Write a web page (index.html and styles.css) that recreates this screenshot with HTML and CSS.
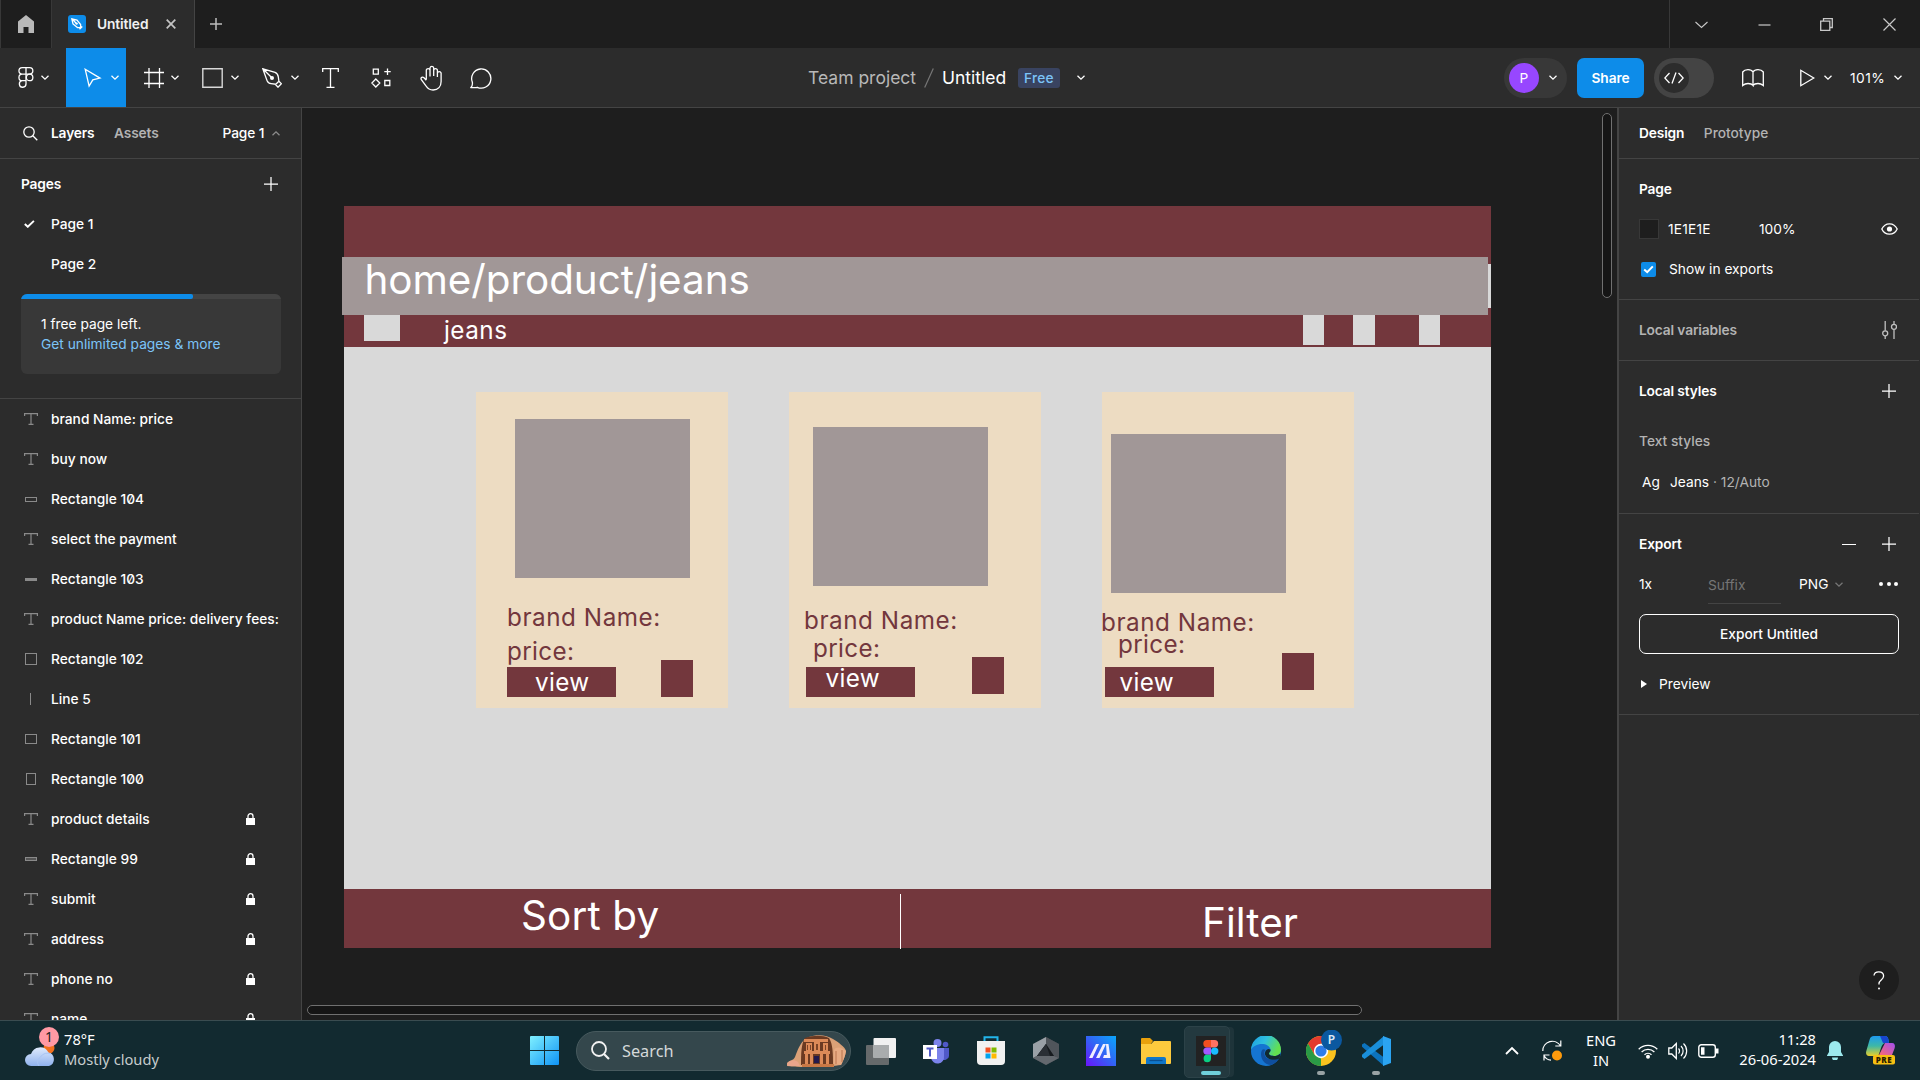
FILE: index.html
```html
<!DOCTYPE html>
<html lang="en">
<head>
<meta charset="utf-8">
<title>Untitled – Figma</title>
<link rel="stylesheet" href="styles.css">
</head>
<body>
<svg class="defs" width="0" height="0">
  <symbol id="chev" viewBox="0 0 8 5"><path d="M.5 .8 4 4.1 7.500 .8" fill="none" stroke="currentColor" stroke-width="1.300"/></symbol>
  <symbol id="plus" viewBox="0 0 14 14"><path d="M7 0v14M0 7h14" fill="none" stroke="currentColor" stroke-width="1.250"/></symbol>
  <symbol id="text" viewBox="0 0 14 12"><path d="M.6 3V.6h12.800V3M7 .6v10.800M4.500 11.400h5" fill="none" stroke="currentColor" stroke-width="1.200"/></symbol>
  <symbol id="lock" viewBox="0 0 9 12"><path d="M0 5h9v7H0z" fill="currentColor"/><path d="M2 5.500V3.200a2.500 2.500 0 0 1 5 0v2.300" fill="none" stroke="currentColor" stroke-width="1.300"/></symbol>
</svg>

<header class="titlebar">
  <div class="home"><svg width="16" height="18" viewBox="0 0 16 18"><path d="M8 0 0 6.500V18h5.500v-6h5v6H16V6.500z" fill="#b9b9b9"/></svg></div>
  <div class="tab">
    <svg width="18" height="18" viewBox="0 0 18 18"><rect width="18" height="18" rx="3" fill="#0d8ce9"/><path d="M3.800 3.800 9 5l3.600 4.500.1 2.200-1 1-2.200-.1L5 9z M3.800 3.800 8.200 8.200M11.500 14.300l2.800-2.800" fill="none" stroke="#fff" stroke-width="1.300"/><circle cx="8.600" cy="8.600" r="1.200" fill="#fff"/></svg>
    <span class="tab-name">Untitled</span>
    <svg class="tab-x" width="10" height="10" viewBox="0 0 10 10"><path d="M.7.7l8.600 8.600M9.300.7.7 9.300" stroke="#c4c4c4" stroke-width="1.700"/></svg>
  </div>
  <svg class="newtab" width="12" height="12" viewBox="0 0 12 12"><path d="M6 0v12M0 6h12" stroke="#bdbdbd" stroke-width="1.500"/></svg>
  <div class="winctl">
    <svg width="13" height="13" viewBox="0 0 13 13"><path d="m.5 4 6 5.500L12.500 4" fill="none" stroke="#c8c8c8" stroke-width="1.100"/></svg>
    <svg width="13" height="13" viewBox="0 0 13 13"><path d="M.5 7h12" stroke="#c8c8c8" stroke-width="1.200"/></svg>
    <svg width="13" height="13" viewBox="0 0 13 13"><path d="M.7 3.200h9.100v9.100H.7zM3.500 3V.7h8.800v8.800H10" fill="none" stroke="#c8c8c8" stroke-width="1.300"/></svg>
    <svg width="13" height="13" viewBox="0 0 13 13"><path d="m.5.5 12 12M12.500.5l-12 12" stroke="#c8c8c8" stroke-width="1.200"/></svg>
  </div>
</header>

<nav class="toolbar">
  <div class="tools">
    <div class="tool menu"><svg width="16" height="21" viewBox="0 0 16 21"><path d="M8 .7H4.200a3.200 3.200 0 0 0 0 6.500H8zM8 .7h3.600a3.200 3.200 0 0 1 0 6.500H8zM8 7.200H4.200a3.200 3.200 0 0 0 0 6.500H8zM8 13.700H4.200a3.300 3.300 0 1 0 3.800 3.200z" fill="none" stroke="#fff" stroke-width="1.300"/><circle cx="11.600" cy="10.450" r="3.250" fill="none" stroke="#fff" stroke-width="1.300"/></svg><svg class="chev"><use href="#chev"/></svg></div>
    <div class="tool active"><svg width="18" height="20" viewBox="0 0 18 20"><path d="M1.200 1.200 16 10.100l-7.200 1.700-3.700 6.300z" fill="none" stroke="#fff" stroke-width="1.300"/></svg><svg class="chev"><use href="#chev"/></svg></div>
    <div class="tool"><svg width="20" height="20" viewBox="0 0 20 20"><path d="M5 0v20M15.500 0v20M0 4.500h20M0 15.500h20" stroke="#fff" stroke-width="1.300"/></svg><svg class="chev"><use href="#chev"/></svg></div>
    <div class="tool rect"><svg width="21" height="20" viewBox="0 0 21 20"><path d="M.8.8h19.400v18.400H.8z" fill="none" stroke="#d8d8d8" stroke-width="1.400"/></svg><svg class="chev"><use href="#chev"/></svg></div>
    <div class="tool pen"><svg width="20" height="20" viewBox="0 0 20 20"><path d="M.8.8 5 12.500c.8 2 2 2.900 4 3.100l4.800.6 3.100-2.900-.6-4.400c-.3-2.300-1.200-3.700-3.200-4.500zM.8.8l9 9M13.500 16.500l2.500 2.700 3.400-3.400-2.500-2.500" fill="none" stroke="#fff" stroke-width="1.300"/><circle cx="10" cy="10" r="2" fill="#fff"/></svg><svg class="chev"><use href="#chev"/></svg></div>
    <div class="tool single type"><svg width="17" height="20" viewBox="0 0 17 20"><path d="M.7 4V.7h15.600V4M8.500.7v18.600M4.500 19.300h8" fill="none" stroke="#fff" stroke-width="1.300"/></svg></div>
    <div class="tool single"><svg width="20" height="20" viewBox="0 0 20 20"><path d="M1.500 1.200h5v5h-5zM13 12.500h5v5h-5zM15.700.5v6.400M12.500 3.700h6.400M4 11l4 4-4 4-4-4z" fill="none" stroke="#fff" stroke-width="1.300" transform="translate(.8 0)"/></svg></div>
    <div class="tool single"><svg width="23" height="26" viewBox="0 0 23 26"><path d="M6.300 14.500V5a1.900 1.900 0 0 1 3.700 0v6.500M10 11V2.800a1.900 1.900 0 0 1 3.700 0V11M13.700 5a1.900 1.900 0 0 1 3.700 0v7M17.400 8a1.900 1.900 0 0 1 3.700 0v8.500c0 5-3 8.500-8 8.500-3.500 0-5.500-1.500-7-4L1.200 14.500c-.8-2 1.300-3.200 2.800-1.800l2.300 2.600" fill="none" stroke="#fff" stroke-width="1.300"/></svg></div>
    <div class="tool single"><svg width="22" height="22" viewBox="0 0 22 22"><path d="M1 20.500c1.600-2 1.700-3.500 1.300-5.500a9.600 9.600 0 1 1 5 5.300c-1.500.5-4 .4-6.300.2z" fill="none" stroke="#fff" stroke-width="1.300"/></svg></div>
  </div>
  <div class="doc">
    <span class="team">Team project</span>
    <svg width="10" height="20" viewBox="0 0 10 20"><path d="M.7 19.500 9.300.5" stroke="#777" stroke-width="1.200"/></svg>
    <span class="docname">Untitled</span>
    <span class="free">Free</span>
    <svg class="chev"><use href="#chev"/></svg>
  </div>
  <div class="actions">
    <div class="avatar"><span>P</span><svg class="chev"><use href="#chev"/></svg></div>
    <div class="share">Share</div>
    <div class="devmode"><span><svg width="20" height="12" viewBox="0 0 20 12"><path d="M5.500 1 .8 6l4.700 5M14.500 1l4.700 5-4.700 5M12 .5 8 11.500" fill="none" stroke="#fff" stroke-width="1.300"/></svg></span></div>
    <svg class="book" width="22" height="18" viewBox="0 0 22 18"><path d="M11 3v13.500C10 15 8 14.500 6 14.500s-3.500.5-5.300 2V3C2 1.200 4 .7 6 .7s4 .6 5 2.300c1-1.700 3-2.300 5-2.300s4 .5 5.300 2.300v13.500c-1.800-1.500-3.300-2-5.300-2s-4 .5-5 2" fill="none" stroke="#fff" stroke-width="1.300"/></svg>
    <svg class="play" width="15" height="18" viewBox="0 0 15 18"><path d="M.8 1.300v15.400L13.800 9z" fill="none" stroke="#fff" stroke-width="1.300"/></svg>
    <svg class="chev"><use href="#chev"/></svg>
    <span class="zoom">101%</span>
    <svg class="chev"><use href="#chev"/></svg>
  </div>
</nav>

<main class="workspace">
  <aside class="left">
    <div class="ltabs">
      <svg width="15" height="15" viewBox="0 0 15 15"><circle cx="6" cy="6" r="5.200" fill="none" stroke="#fff" stroke-width="1.300"/><path d="m9.800 9.800 4.500 4.500" stroke="#fff" stroke-width="1.300"/></svg>
      <b class="t-layers">Layers</b><b class="t-assets">Assets</b>
      <span class="pagepick">Page 1</span><svg class="chev up"><use href="#chev"/></svg>
    </div>
    <section class="pages">
      <div class="pages-head"><b>Pages</b><svg class="plus"><use href="#plus"/></svg></div>
      <div class="page"><svg width="11" height="8" viewBox="0 0 11 8"><path d="m.8 4 3 2.800L9.900.9" fill="none" stroke="#fff" stroke-width="1.900"/></svg><span>Page 1</span></div>
      <div class="page"><i></i><span>Page 2</span></div>
      <div class="upsell"><div class="meter"><i></i></div><p>1 free page left.</p><p class="link">Get unlimited pages &amp; more</p></div>
    </section>
    <ul class="layers">
      <li><svg class="ti"><use href="#text"/></svg><span>brand Name: price</span></li>
      <li><svg class="ti"><use href="#text"/></svg><span>buy now</span></li>
      <li><i class="r wide"></i><span>Rectangle 104</span></li>
      <li><svg class="ti"><use href="#text"/></svg><span>select the payment</span></li>
      <li><i class="r flat"></i><span>Rectangle 103</span></li>
      <li><svg class="ti"><use href="#text"/></svg><span>product Name price: delivery fees:</span></li>
      <li><i class="r sq"></i><span>Rectangle 102</span></li>
      <li><i class="r line"></i><span>Line 5</span></li>
      <li><i class="r mid"></i><span>Rectangle 101</span></li>
      <li><i class="r tall"></i><span>Rectangle 100</span></li>
      <li><svg class="ti"><use href="#text"/></svg><span>product details</span><svg class="lock"><use href="#lock"/></svg></li>
      <li><i class="r thin"></i><span>Rectangle 99</span><svg class="lock"><use href="#lock"/></svg></li>
      <li><svg class="ti"><use href="#text"/></svg><span>submit</span><svg class="lock"><use href="#lock"/></svg></li>
      <li><svg class="ti"><use href="#text"/></svg><span>address</span><svg class="lock"><use href="#lock"/></svg></li>
      <li><svg class="ti"><use href="#text"/></svg><span>phone no</span><svg class="lock"><use href="#lock"/></svg></li>
      <li><svg class="ti"><use href="#text"/></svg><span>name</span><svg class="lock"><use href="#lock"/></svg></li>
    </ul>
  </aside>

  <section class="canvas">
    <div class="frame">
      <div class="shape topbar"></div>
      <div class="shape bottombar"></div>
      <div class="shape strip"></div>
      <div class="shape crumbs"></div>
      <div class="shape logo"></div>
      <div class="shape nav1"></div><div class="shape nav2"></div><div class="shape nav3"></div>
      <div class="label xl crumb-text">home/product/jeans</div>
      <div class="label md jeans-text">jeans</div>

      <div class="shape card c1"></div><div class="shape photo p1"></div>
      <div class="label md dark b1">brand Name:</div><div class="label md dark r1">price:</div>
      <div class="shape btn v1"></div><div class="shape fav f1"></div><div class="label md w1">view</div>

      <div class="shape card c2"></div><div class="shape photo p2"></div>
      <div class="label md dark b2">brand Name:</div><div class="label md dark r2">price:</div>
      <div class="shape btn v2"></div><div class="shape fav f2"></div><div class="label md w2">view</div>

      <div class="shape card c3"></div><div class="shape photo p3"></div>
      <div class="label md dark b3">brand Name:</div><div class="label md dark r3">price:</div>
      <div class="shape btn v3"></div><div class="shape fav f3"></div><div class="label md w3">view</div>

      <div class="shape divider"></div>
      <div class="label xl sort">Sort by</div>
      <div class="label xl filter">Filter</div>
    </div>
    <div class="vscroll"></div>
    <div class="hscroll"></div>
  </section>

  <aside class="right">
    <div class="rtabs"><b>Design</b><span>Prototype</span></div>
    <section class="sec-page">
      <div class="row h40"><b>Page</b></div>
      <div class="row h40"><i class="swatch"></i><span class="hex">1E1E1E</span><span>100%</span>
        <svg class="end eye" width="17" height="12" viewBox="0 0 17 12"><path d="M.8 6C2.300 2.800 5 .8 8.500.8s6.200 2 7.700 5.200c-1.500 3.200-4.200 5.200-7.700 5.200S2.300 9.200.8 6z" fill="none" stroke="#fff" stroke-width="1.300"/><circle cx="8.500" cy="6" r="2.600" fill="#fff"/></svg></div>
      <div class="row h40"><i class="check"><svg width="11" height="9" viewBox="0 0 11 9"><path d="m1.200 4.500 3 2.700L9.800 1.400" fill="none" stroke="#fff" stroke-width="2"/></svg></i><span>Show in exports</span></div>
    </section>
    <section class="sec-vars"><div class="row h60"><b class="muted">Local variables</b>
      <svg class="end vars" width="15" height="18" viewBox="0 0 15 18"><path d="M3.200 0v9.800M3.200 15v3M12 0v3M12 8.500V18" stroke="#c0c0c0" stroke-width="1.300"/><circle cx="3.200" cy="12.300" r="2.500" fill="none" stroke="#c0c0c0" stroke-width="1.300"/><circle cx="12" cy="5.800" r="2.500" fill="none" stroke="#c0c0c0" stroke-width="1.300"/></svg></div></section>
    <section class="sec-styles">
      <div class="row h60"><b>Local styles</b><svg class="plus end"><use href="#plus"/></svg></div>
      <div class="row h40"><span class="muted med">Text styles</span></div>
      <div class="row h42"><span class="ag">Ag</span><span>Jeans <em>· 12/Auto</em></span></div>
    </section>
    <section class="sec-export">
      <div class="row h60"><b>Export</b><i class="minus"></i><svg class="plus"><use href="#plus"/></svg></div>
      <div class="row exp"><span class="scale">1x</span><span class="suffix">Suffix</span><span>PNG</span><svg class="chev dim"><use href="#chev"/></svg><span class="dots"><i></i><i></i><i></i></span></div>
      <div class="exportbtn">Export Untitled</div>
      <div class="row h60"><svg class="tri" width="6" height="8" viewBox="0 0 6 8"><path d="M0 0v8l6-4z" fill="#fff"/></svg><span>Preview</span></div>
    </section>
    <div class="help"><svg width="12" height="19" viewBox="0 0 12 19"><path d="M1 4.500C1.200 2 3 .8 5.800.8S10.600 2.500 10.600 5c0 3.800-4.600 4-4.600 7.500v1" fill="none" stroke="#fff" stroke-width="1.300"/><circle cx="6" cy="17.500" r="1" fill="#fff"/></svg></div>
  </aside>
</main>

<footer class="taskbar">
  <div class="weather">
    <svg width="36" height="40" viewBox="0 0 36 40">
      <defs><linearGradient id="cl" x1="0" y1="0" x2="0" y2="1"><stop offset="0" stop-color="#dfeafc"/><stop offset="1" stop-color="#8fb2ee"/></linearGradient></defs>
      <circle cx="24" cy="17" r="5.500" fill="#f2701d"/>
      <path d="M6 35a6 6 0 0 1 0-12 9.500 9.500 0 0 1 17.500-1.500A7 7 0 0 1 24 35z" fill="url(#cl)"/>
      <path d="M14 35a6 6 0 0 1 1.500-9 8 8 0 0 1 10.500-3" fill="none" stroke="#a9c5f3" stroke-width="1"/>
    </svg>
    <span class="badge">1</span>
    <div class="forecast"><p>78°F</p><p class="cloudy">Mostly cloudy</p></div>
  </div>
  <svg class="win" width="29" height="29" viewBox="0 0 29 29"><defs><linearGradient id="wg" x1="0" y1="0" x2="1" y2="1"><stop offset="0" stop-color="#7ff0ff"/><stop offset="1" stop-color="#0f93f5"/></linearGradient></defs><path d="M0 1a1 1 0 0 1 1-1h13v14H0zM15 0h13a1 1 0 0 1 1 1v13H15zM0 15h14v14H1a1 1 0 0 1-1-1zM15 15h14v13a1 1 0 0 1-1 1H15z" fill="url(#wg)"/></svg>
  <div class="search">
    <svg width="19" height="19" viewBox="0 0 19 19"><circle cx="8" cy="8" r="7" fill="none" stroke="#f2f2f2" stroke-width="1.800"/><path d="m13 13 5 5" stroke="#f2f2f2" stroke-width="2.200"/></svg>
    <span>Search</span>
    <svg class="petra" width="60" height="32" viewBox="0 0 60 32">
      <path d="M0 28c3-3 6-2 8-6 3-8 6-17 14-20C30-1 40 0 46 4c5 3 12 8 13 12-1 6-3 10-5 14-12 2-40 3-54 1z" fill="#dba177"/>
      <path d="M14 30c0-10 0-21 4-27 8-3 18-3 24 0 4 6 4 17 4 27z" fill="#6b3a22"/>
      <path d="M17 4h24v3H17zM19 8h6v8h-6zM27 6h6v10h-6zM36 8h5v8h-5zM17 16h26v3H17zM18 19h3v11h-3zM23 19h3v11h-3zM33 19h3v11h-3zM39 19h3v11h-3z" fill="#dc8a58"/>
      <path d="M20 10h1v5h-1zM23 10h1v5h-1zM29 9h2v6h-2zM38 10h1v5h-1z" fill="#7d4426"/>
      <path d="M27 21h5v7h-5z" fill="#241a4d"/><path d="M15 29h32v3H15z" fill="#c97845"/>
      <path d="M47 15c2-4 8-3 12 1-1 6-3 10-5 14l-7-1z" fill="#e8ab83"/><path d="M49 16v13M55 15v12" stroke="#b9744e"/>
      <path d="M0 29c2-4 7-5 11-2l2 4H1z" fill="#e9a58b"/>
    </svg>
  </div>
  <div class="apps">
    <div class="app"><svg width="32" height="32" viewBox="0 0 32 32"><rect x="1" y="10" width="23" height="20" rx="1" fill="#666a6b"/><rect x="8.500" y="3" width="22.500" height="20" rx="1" fill="#f1f1f1"/><path d="M8.500 10H24v13H8.500z" fill="#a9acad"/></svg></div>
    <div class="app"><svg width="30" height="30" viewBox="0 0 30 30"><circle cx="16.500" cy="7" r="4" fill="#7b83eb"/><circle cx="24.500" cy="8.500" r="2.800" fill="#5059c9"/><path d="M20 12h8v8a5 5 0 0 1-8 3z" fill="#5059c9"/><path d="M10 12h13v8a6.500 6.500 0 0 1-13 2z" fill="#7b83eb"/><path d="M2 9h14v14H2z" fill="#fff"/><path d="M5.500 12.500h7M9 12.500v8" stroke="#5059c9" stroke-width="2"/></svg></div>
    <div class="app"><svg width="30" height="30" viewBox="0 0 30 30"><path d="M8.500 6V1.200h13V6" fill="none" stroke="#22b5ea" stroke-width="2"/><path d="M1 5h28v20a4 4 0 0 1-4 4H5a4 4 0 0 1-4-4z" fill="#f1f1f1"/><path d="M9.500 11.500h5v5h-5z" fill="#f25022"/><path d="M15.500 11.500h5v5h-5z" fill="#7fba00"/><path d="M9.500 17.500h5v5h-5z" fill="#00a4ef"/><path d="M15.500 17.500h5v5h-5z" fill="#ffb900"/></svg></div>
    <div class="app"><svg width="30" height="30" viewBox="0 0 30 30"><path d="m15 1 13 7v14l-13 7-13-7V8z" fill="#3b4046"/><path d="M15 1 2 8v14l4-2 9-12z" fill="#9aa0a6"/><path d="m15 1 13 7v14l-5-2-8-12z" fill="#50555b"/><path d="M15 8 23 20H6z" fill="#171b1f"/><path d="m15 8 4 12H6z" fill="#2a2f35"/><path d="m2 22 4-2h17l5 2-13 7z" fill="#63686e"/></svg></div>
    <div class="app"><svg width="30" height="30" viewBox="0 0 30 30"><defs><linearGradient id="mg" x1="1" y1="0" x2="0" y2="1"><stop offset="0" stop-color="#0aa7fb"/><stop offset=".5" stop-color="#3263f5"/><stop offset="1" stop-color="#6a13fb"/></linearGradient></defs><path d="M0 0h30v30H0z" fill="url(#mg)"/><path d="M3 22 10 8h3L6.500 22zM10 22l7-14h3l-6.500 14zM20 8h2.500l2 14H21zM18 19h5v3h-6z" fill="#f1eefe"/></svg></div>
    <div class="app"><svg width="30" height="30" viewBox="0 0 30 30"><path d="M0 3a1 1 0 0 1 1-1h8l3 3-3 4H0z" fill="#e8a10c"/><path d="M0 8h10l3-3h16a1 1 0 0 1 1 1v21a1 1 0 0 1-1 1H0z" fill="#fdca3d"/><path d="M5 28v-5a2 2 0 0 1 2-2h16a2 2 0 0 1 2 2v5z" fill="#1177c9"/><path d="M8.500 24.500h13" stroke="#0a4f91" stroke-width="1.300"/></svg></div>
    <div class="app current"><svg width="30" height="30" viewBox="0 0 30 30"><path d="M0 0h30v30H0z" fill="#222"/><path d="M15 4h-4a3.700 3.700 0 0 0 0 7.400h4z" fill="#f24e1e"/><path d="M15 4h3.500a3.700 3.700 0 0 1 0 7.400H15z" fill="#ff7262"/><path d="M15 11.400h-4a3.700 3.700 0 0 0 0 7.400h4z" fill="#a259ff"/><circle cx="18.700" cy="15.100" r="3.700" fill="#1abcfe"/><path d="M15 18.800h-4a3.700 3.700 0 1 0 4 3.700z" fill="#0acf83"/></svg><i class="pill"></i></div>
    <div class="app"><svg width="30" height="30" viewBox="0 0 30 30"><defs><linearGradient id="eg" x1="0" y1="0" x2="1" y2=".4"><stop offset="0" stop-color="#1b9ae0"/><stop offset=".5" stop-color="#2fc1e0"/><stop offset="1" stop-color="#63e04f"/></linearGradient></defs><circle cx="15" cy="15" r="15" fill="#1575d1"/><path d="M0 14A15 15 0 0 1 30 14c0 4-3.500 6-7 6-3 0-5-1-5-2.500s2-1.500 1.500-4C19 10 15 8 11 8 6 8 1.500 10.500 0 14z" fill="url(#eg)"/><path d="M11 14c-3 6 1 15 9 15 3-1 6-3 8-6.500-5 2.500-13 1.500-14.500-4-.5-2 0-3.500 1-4.500-1-1-3-1-3.500 0z" fill="#0f4f9e"/><path d="M19.500 13.500c.5 2.500-1.500 2.500-1.500 4s2 2.500 5 2.500c2 0 4-.5 5.500-2l1 0-1 4.500c-5 2.500-13 1.500-14.500-4-.7-3 2-7 5.500-5z" fill="#122a30"/></svg></div>
    <div class="app"><svg width="36" height="36" viewBox="0 0 36 36" class="chrome"><circle cx="15" cy="21" r="15" fill="#fcc31e"/><path d="M2 13.500A15 15 0 0 1 28 13.500H15L8.500 24.500z" fill="#e33b2e"/><path d="M2 13.500 8.500 24.700l6.500 3.800L15 36A15 15 0 0 1 2 13.500z" fill="#2a9a46"/><circle cx="15" cy="21" r="7.200" fill="#fff"/><circle cx="15" cy="21" r="5.600" fill="#2f7de9"/><circle cx="25.500" cy="10" r="10.500" fill="#0b58a0"/><text x="25.500" y="14" text-anchor="middle" class="p">P</text></svg><i class="dot"></i></div>
    <div class="app"><svg width="30" height="30" viewBox="0 0 30 30"><path d="M1 8.500 3.500 7 23 21.500V30L1 10.800z" fill="#0c73bd"/><path d="M1 21 3.500 23 23 8.500V0L1 18.800z" fill="#1a8fda"/><path d="m22 0 8 3v24l-8 3z" fill="#2ba4f2"/></svg><i class="dot"></i></div>
  </div>
  <div class="tray">
    <svg class="tc" width="14" height="9" viewBox="0 0 14 9"><path d="M1 8 7 2l6 6" fill="none" stroke="#fff" stroke-width="1.800"/></svg>
    <svg class="sync" width="21" height="21" viewBox="0 0 21 21"><path d="M.8 11A9.500 9.500 0 0 1 18.500 6M18.800.5V6h-5.500M2 20.500V15h5.500M2 15.500c1.500 3 4 4.500 7 4.700" fill="none" stroke="#fff" stroke-width="1.200"/><circle cx="15" cy="15.500" r="5" fill="#ff9b0c"/></svg>
    <div class="lang"><p>ENG</p><p>IN</p></div>
    <svg class="wifi" width="20" height="16" viewBox="0 0 20 16"><path d="M.7 6.200a13.200 13.200 0 0 1 18.600 0M3.600 9a9.200 9.200 0 0 1 12.800 0M6.500 11.800a5 5 0 0 1 7 0" fill="none" stroke="#fff" stroke-width="1.300"/><circle cx="10" cy="13.800" r="2" fill="#fff"/></svg>
    <svg class="spk" width="20" height="18" viewBox="0 0 20 18"><path d="M.8 6h3l4.500-4.500v15L3.800 12h-3z" fill="none" stroke="#fff" stroke-width="1.300"/><path d="M10.500 6.500a3.500 3.500 0 0 1 0 5M13 4a7 7 0 0 1 0 10M15.500 1.500a10.500 10.500 0 0 1 0 15" fill="none" stroke="#fff" stroke-width="1.200"/></svg>
    <svg class="bat" width="21" height="14" viewBox="0 0 21 14"><rect x=".8" y=".8" width="16.500" height="12.400" rx="2.500" fill="none" stroke="#fff" stroke-width="1.400"/><path d="M3 3.200h3.500v7.600H3zM18 4.500h2.500v5H18z" fill="#fff"/></svg>
    <div class="clock"><p>11:28</p><p>26-06-2024</p></div>
    <svg class="bell" width="16" height="19" viewBox="0 0 16 19"><path d="M8 0a6 6 0 0 0-6 6v5l-2 3.500V15h16v-.5L14 11V6a6 6 0 0 0-6-6zM5 16.500h6a3 3 0 0 1-6 0z" fill="#9ce9ee"/></svg>
    <svg class="copilot" width="30" height="29" viewBox="0 0 30 29"><defs><linearGradient id="ca" x1="0" y1="0" x2="0" y2="1"><stop offset="0" stop-color="#1d9bf0"/><stop offset=".5" stop-color="#3eb8a6"/><stop offset="1" stop-color="#e9cf2a"/></linearGradient><linearGradient id="cb" x1="1" y1="0" x2="0" y2="1"><stop offset="0" stop-color="#a24ff0"/><stop offset="1" stop-color="#fb6a74"/></linearGradient></defs><path d="M8 0h11c2 0 3 1 3.500 4l.5 3h-3c-3 0-4 2-5 5l-2 6c-.5 1.500-1 2-2.500 2H3c-2.500 0-3.500-2-2.700-5L3.500 4C4.300 1 5.500 0 8 0z" fill="url(#ca)"/><path d="M14 0h5c2 0 3 1 3.500 4l.5 3h-6z" fill="#1746cf"/><path d="M19 7h7c2.500 0 3.500 2 2.700 5L26 19H13z" fill="url(#cb)"/><rect x="7" y="19" width="22" height="9.500" rx="2" fill="#f7bf12"/><text x="18" y="27" text-anchor="middle" class="pre">PRE</text></svg>
  </div>
</footer>
</body>
</html>
```
FILE: styles.css
```css
* { box-sizing: border-box; margin: 0; padding: 0; }
body { width: 1920px; height: 1080px; overflow: hidden; display: flex; flex-direction: column; background: #1e1e1e; color: #fff; font: 400 13.75px/20px Inter, sans-serif; }
svg { display: block; flex: none; }
.defs { position: absolute; }
b { font-weight: 600; letter-spacing: -.15px; }
i { font-style: normal; flex: none; }
em { font-style: normal; color: #b3b3b3; }
.chev { width: 8px; height: 5px; color: #fff; }
.plus { width: 14px; height: 14px; color: #fff; }

/* title bar */
.titlebar { height: 48px; flex: none; display: flex; align-items: center; background: #1e1e1e; }
.home { width: 52px; height: 48px; display: flex; align-items: center; border-right: 1px solid #383838; border-left: 1px solid #383838; padding-left: 17px; }
.tab { width: 143px; height: 48px; background: #2c2c2c; border-right: 1px solid #444; display: flex; align-items: center; padding-left: 16px; }
.tab-name { font-weight: 600; letter-spacing: -.1px; margin-left: 11px; width: 69px; color: #f0f0f0; }
.newtab { margin-left: 15px; }
.winctl { margin-left: auto; width: 251px; height: 48px; border-left: 1px solid #383838; display: flex; align-items: center; gap: 49.500px; padding-left: 25px; }

/* toolbar */
.toolbar { height: 60px; flex: none; display: flex; align-items: center; background: #2c2c2c; border-bottom: 1px solid #444; }
.tools { width: 808px; display: flex; height: 59px; }
.tool { width: 60px; display: flex; align-items: center; justify-content: flex-end; padding-right: 7px; gap: 7.500px; }
.tool.menu { width: 66px; padding-right: 17px; gap: 7px; }
.tool.active { background: #0d8ce9; gap: 9px; }
.tool.rect { gap: 8.500px; }
.tool.pen { gap: 9.500px; }
.tool.single { width: 50px; padding: 0; justify-content: center; }
.tool.type { padding-right: 2px; }
.doc { display: flex; align-items: center; font-size: 17.500px; }
.team { color: #b8b8b8; width: 116px; }
.docname { width: 76px; margin-left: 8px; }
.free { width: 42px; height: 20px; border-radius: 3px; background: #394360; color: #7cc4f8; font-size: 13.750px; font-weight: 500; text-align: center; margin-right: 17px; letter-spacing: .2px; }
.actions { margin-left: auto; display: flex; align-items: center; padding-right: 18px; }
.avatar { width: 63px; height: 40px; border-radius: 20px; background: #383838; display: flex; align-items: center; gap: 10px; padding-left: 5px; }
.avatar span { width: 30px; height: 30px; border-radius: 50%; background: #9747ff; text-align: center; line-height: 30px; }
.share { width: 67px; height: 40px; margin: 0 10px; border-radius: 7px; background: #0d8ce9; text-align: center; line-height: 40px; font-weight: 600; letter-spacing: -.1px; }
.devmode { width: 60px; height: 40px; border-radius: 20px; background: #444; padding: 5px; }
.devmode span { width: 30px; height: 30px; border-radius: 50%; background: #2c2c2c; display: flex; align-items: center; justify-content: center; }
.book { margin: 0 36px 0 28px; }
.play { margin-right: 9px; }
.zoom { margin-left: 18px; width: 44px; letter-spacing: .5px; }

/* layers panel */
.workspace { flex: 1; min-height: 0; display: flex; }
.left { width: 302px; background: #2c2c2c; border-right: 1px solid #444; overflow: hidden; }
.ltabs { height: 51px; border-bottom: 1px solid #444; display: flex; align-items: center; padding-left: 23px; }
.t-layers { margin-left: 13px; width: 63px; }
.t-assets { color: #b3b3b3; width: 108.500px; }
.pagepick { width: 48px; letter-spacing: -.1px; font-weight: 500; }
.chev.up { transform: rotate(180deg); color: #8c8c8c; margin-left: 1px; }
.pages { height: 240px; border-bottom: 1px solid #444; padding-top: 5px; }
.pages-head { height: 40px; display: flex; align-items: center; justify-content: space-between; padding: 0 23px 0 21px; }
.page { height: 40px; display: flex; align-items: center; padding-left: 24px; gap: 16px; font-weight: 500; }
.page i { width: 11px; }
.page + .page { font-weight: 450; }
.upsell { margin: 10px 20px 0 21px; height: 80px; border-radius: 6px; overflow: hidden; background: #383838; }
.meter { height: 5px; background: #444; margin-bottom: 15px; }
.meter i { display: block; width: 172px; height: 5px; background: #0d8ce9; border-radius: 0 2px 2px 0; }
.upsell p { padding-left: 20px; }
.link { color: #7cc4f8; }
.layers { list-style: none; }
.layers li { height: 40px; display: flex; align-items: center; padding-left: 24px; font-feature-settings: "zero"; font-weight: 450; letter-spacing: .02px; white-space: nowrap; }
.layers span { width: 195px; }
.ti { width: 14px; height: 12px; color: #8a8a8a; margin-right: 13px; }
.r { border: 1px solid #8a8a8a; width: 12px; margin: 0 14px 0 1px; }
.wide { height: 5px; } .flat { height: 3px; background: #8a8a8a; } .sq { height: 12px; } .mid { height: 10px; } .thin { height: 4px; background: #555; }
.tall { height: 12px; width: 10px; margin: 0 15px 0 2px; }
.line { width: 1px; height: 12px; border-width: 0 0 0 1px; margin: 0 20px 0 6px; }
.lock { width: 9px; height: 12px; color: #fff; }

/* design canvas */
.canvas { flex: 1; position: relative; overflow: hidden; background: #1e1e1e; }
.frame { position: absolute; left: 42px; top: 98px; width: 1147px; height: 742px; background: #d9d9d9; }
.shape, .label { position: absolute; }
.label { line-height: 1; white-space: nowrap; color: #fff; }
.xl { font-size: 40.400px; }
.md { font-size: 24.240px; letter-spacing: .35px; }
.dark { color: #73373d; }
.topbar { left: 0; top: 0; width: 1147px; height: 141px; background: #73373d; }
.bottombar { left: 0; top: 683px; width: 1147px; height: 59px; background: #73373d; }
.strip { left: 1100px; top: 58px; width: 47px; height: 44px; background: #d9d9d9; }
.crumbs { left: -2px; top: 51px; width: 1146px; height: 58px; background: #a19797; }
.logo { left: 20px; top: 109px; width: 36px; height: 26px; background: #d9d9d9; }
.nav1, .nav2, .nav3 { top: 109px; width: 21px; height: 30px; background: #d9d9d9; }
.nav1 { left: 959px; } .nav2 { left: 1009px; width: 22px; } .nav3 { left: 1075px; }
.crumb-text { left: 20.500px; top: 54px; letter-spacing: -.05px; } .jeans-text { left: 100px; top: 112.500px; letter-spacing: .5px; }
.card { top: 186px; width: 252px; height: 316px; background: #eddcc2; }
.c1 { left: 132px; } .c2 { left: 445px; } .c3 { left: 758px; }
.photo { width: 175px; height: 159px; background: #a19797; }
.p1 { left: 171px; top: 213px; } .p2 { left: 469px; top: 221px; } .p3 { left: 767px; top: 228px; }
.btn { top: 461px; width: 109px; height: 30px; background: #73373d; }
.v1 { left: 163px; } .v2 { left: 462px; } .v3 { left: 761px; }
.fav { width: 32px; height: 37px; background: #73373d; }
.f1 { left: 317px; top: 454px; } .f2 { left: 628px; top: 451px; } .f3 { left: 938px; top: 447px; }
.b1, .b2, .b3 { letter-spacing: .55px; }
.b1 { left: 163px; top: 400px; } .r1 { left: 163px; top: 434px; } .w1 { left: 191px; top: 464.500px; }
.b2 { left: 460px; top: 402.500px; } .r2 { left: 469px; top: 430.500px; } .w2 { left: 481.500px; top: 460.500px; }
.b3 { left: 757px; top: 405px; } .r3 { left: 774px; top: 427px; } .w3 { left: 775.500px; top: 464.500px; }
.divider { left: 556px; top: 688px; width: 1px; height: 55px; background: #fff; }
.sort { left: 177px; top: 690px; letter-spacing: .15px; } .filter { left: 858px; top: 697px; letter-spacing: .1px; }
.vscroll { position: absolute; left: 1300px; top: 5px; width: 10px; height: 185px; border: 1px solid #707070; border-radius: 5px; background: #151515; }
.hscroll { position: absolute; left: 5px; top: 897px; width: 1055px; height: 10px; border: 1px solid #707070; border-radius: 5px; background: #151515; }

/* inspector */
.right { width: 303px; background: #2c2c2c; border-left: 2px solid #444; position: relative; padding-right: 1px; }
.right section { border-bottom: 1px solid #444; }
.rtabs { height: 51px; border-bottom: 1px solid #444; display: flex; align-items: center; gap: 19.500px; padding-left: 20px; }
.rtabs span { color: #b3b3b3; font-weight: 500; }
.row { display: flex; align-items: center; padding: 0 23px 0 20px; }
.h40 { height: 40px; } .h42 { height: 42px; } .h60 { height: 60px; }
.end { margin-left: auto; }
.eye { margin-right: -1.500px; } .vars { margin-right: -1px; }
.sec-page { height: 141px; padding-top: 10px; }
.sec-vars { height: 61px; }
.sec-styles { height: 153px; }
.sec-export { height: 201px; }
.swatch { width: 20px; height: 20px; background: #1e1e1e; border: 1px solid #383838; margin-right: 9px; }
.hex { width: 91px; letter-spacing: .2px; }
.check { width: 15px; height: 15px; border-radius: 2px; background: #0d8ce9; margin: 0 13px 0 2px; padding: 3px 2px; }
.muted { color: #b3b3b3; } .med { font-weight: 500; }
.ag { width: 31px; padding-left: 3px; }
.minus { width: 14px; height: 1px; background: #fff; margin: 0 26px 0 auto; }
.exp { height: 20px; margin-bottom: 20px; }
.scale { width: 69px; }
.suffix { width: 73px; height: 38px; line-height: 38px; color: #757575; border-bottom: 1px solid #444; margin-right: 18px; margin-bottom: -2px; }
.chev.dim { color: #777; margin-left: 7px; }
.dots { margin-left: auto; display: flex; gap: 3.500px; margin-right: -2px; }
.dots i { width: 4px; height: 4px; border-radius: 50%; background: #fff; }
.exportbtn { margin: 0 20px; height: 40px; border: 1px solid #fff; border-radius: 7px; text-align: center; line-height: 38px; font-weight: 500; }
.tri { margin: 0 12px 0 2px; }
.help { position: absolute; right: 21px; bottom: 20px; width: 40px; height: 40px; border-radius: 50%; background: #1e1e1e; display: flex; align-items: center; justify-content: center; }

/* taskbar */
.taskbar { height: 60px; flex: none; display: flex; align-items: center; background: #122a30; border-top: 1px solid #3a4c50; font: 400 14.700px/20px "Noto Sans", "Open Sans", sans-serif; }
.weather { position: relative; width: 530px; display: flex; align-items: center; padding-left: 25px; }
.weather svg { margin-right: 3px; }
.forecast { padding-bottom: 4px; }
.badge { position: absolute; left: 39px; top: -2px; width: 20px; height: 20px; border-radius: 50%; background: #ff99a4; color: #222; text-align: center; font-size: 14px; }
.cloudy { color: #c6cccd; }
.search { width: 275px; height: 40px; margin-left: 17px; border-radius: 20px; background: #34474c; border: 1px solid #475a5e; display: flex; align-items: center; padding-left: 14px; color: #d5d9da; font-size: 16.300px; }
.search span { margin-left: 12px; }
.petra { margin-left: auto; margin-right: 3px; }
.apps { display: flex; margin-left: 2px; }
.app { width: 55px; height: 50px; display: flex; align-items: center; justify-content: center; position: relative; }
.current::before { content: ""; position: absolute; left: 1px; top: 0; width: 44px; height: 50px; border-radius: 5px; background: #23393f; border: 1px solid #2c4248; box-shadow: 5px 0 0 -1px #1e343a; }
.current svg { position: relative; }
.pill, .dot { position: absolute; bottom: 1px; height: 4px; border-radius: 2px; }
.pill { left: 18px; width: 20px; background: #6fd0db; }
.dot { left: 24px; width: 8px; background: #99a3a5; }
.chrome { margin: -6px 0 0 6px; }
.p { font: 600 12px "Noto Sans", sans-serif; fill: #dce9f5; }
.tray { margin-left: auto; display: flex; align-items: center; padding-right: 24px; }
.sync { margin: 0 23px 0 23px; }
.lang { width: 30px; text-align: center; margin-right: 22px; padding-bottom: 2px; }
.wifi { margin-right: 10px; } .spk { margin-right: 10px; }
.clock { width: 97px; text-align: right; margin-right: 11px; padding-bottom: 3px; }
.bell { margin-right: 23px; }
.pre { font: 800 8px "Open Sans", sans-serif; fill: #2b1e00; letter-spacing: .5px; }
```
